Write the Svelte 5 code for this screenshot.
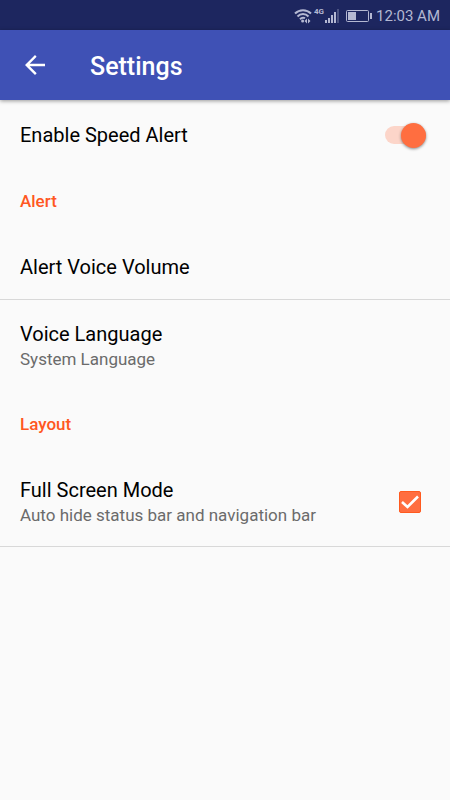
<!--
  App.svelte — settings screen for the speed alert app.
-->
<script lang="ts">
  let speedAlert = $state(true);
  let fullScreen = $state(true);
</script>

<div class="screen">
  <!-- System status bar -->
  <div class="status-bar">
    <svg class="status-wifi" viewBox="0 0 18 16" width="18" height="16" aria-hidden="true">
      <g fill="none" stroke="currentColor" stroke-width="2">
        <path d="M1 5.5C5.5 1 12.5 1 17 5.5" />
        <path d="M3.5 8.5C6.5 5.3 11.5 5.3 14.5 8.5" />
        <path d="M6 11.2C7.5 9.6 9.5 9.4 11 10.2" />
      </g>
      <circle cx="8.6" cy="13" r="1.5" fill="currentColor" />
      <path d="M13 10.5L10.5 13L13 15.5zM14 10.5L16.5 13L14 15.5z" fill="currentColor" />
    </svg>
    <span class="status-network">4G</span>
    <svg class="status-signal" viewBox="0 0 16 14" width="16" height="14" aria-hidden="true">
      <path d="M1 11h2v3H1zM4 9h2v5H4zM7 6h2v8H7zM10 3h2v11h-2z" fill="currentColor" />
      <path d="M13 0h2v14h-2z" fill="currentColor" opacity="0.3" />
    </svg>
    <svg class="status-battery" viewBox="0 0 26 13" width="26" height="13" aria-hidden="true">
      <rect x="0.5" y="0.5" width="22" height="11" rx="1" fill="none" stroke="currentColor" />
      <rect x="2" y="2" width="8" height="8" fill="currentColor" />
      <rect x="24" y="3" width="2" height="6" fill="currentColor" />
    </svg>
    <span class="status-time">12:03 AM</span>
  </div>

  <!-- App bar -->
  <header class="app-bar">
    <button class="back" type="button" aria-label="Back">
      <svg viewBox="0 0 20 20" width="20" height="20" aria-hidden="true">
        <path
          d="M20 8.8H4.7L11.6 1.8L10 0L0 10L10 20L11.7 18.2L4.7 11.2H20z"
          fill="currentColor"
        />
      </svg>
    </button>
    <h1>Settings</h1>
  </header>

  <main>
    <label class="row">
      <span class="row-text">
        <span class="row-title">Enable Speed Alert</span>
      </span>
      <input class="switch" type="checkbox" role="switch" bind:checked={speedAlert} />
    </label>

    <h2>Alert</h2>
    <button class="row divided" type="button">
      <span class="row-text">
        <span class="row-title">Alert Voice Volume</span>
      </span>
    </button>
    <button class="row" type="button">
      <span class="row-text">
        <span class="row-title">Voice Language</span>
        <span class="row-summary">System Language</span>
      </span>
    </button>

    <h2>Layout</h2>
    <label class="row divided">
      <span class="row-text">
        <span class="row-title">Full Screen Mode</span>
        <span class="row-summary">Auto hide status bar and navigation bar</span>
      </span>
      <span class="check">
        <input type="checkbox" bind:checked={fullScreen} />
        {#if fullScreen}
          <svg viewBox="0 0 22 22" width="22" height="22" aria-hidden="true">
            <path d="M3 11L8.5 16L19 5.5" fill="none" stroke="#fff" stroke-width="2.6" />
          </svg>
        {/if}
      </span>
    </label>
  </main>
</div>

<style>
  :global(body) {
    background: #fafafa;
  }

  .screen {
    min-height: 100vh;
    background: #fafafa;
    color: #000;
    font-family: Roboto, "Liberation Sans", sans-serif;
  }

  /* ── Status bar ── */
  .status-bar {
    display: flex;
    align-items: center;
    justify-content: flex-end;
    box-sizing: border-box;
    height: 30px;
    padding: 2px 10px 0 0;
    background: #1d265f;
    color: #b4b8d2;
  }

  .status-network {
    align-self: flex-start;
    margin: 5px 0 0 2px;
    font-size: 8px;
    font-weight: 700;
    line-height: 9px;
  }

  .status-signal {
    margin-right: 6px;
  }

  .status-battery {
    margin-right: 4px;
  }

  .status-time {
    font-size: 15px;
    line-height: 20px;
  }

  /* ── App bar ── */
  .app-bar {
    display: flex;
    align-items: center;
    height: 70px;
    background: #3f51b5;
    color: #fff;
    box-shadow: 0 1px 4px rgba(0, 0, 0, 0.4);
  }

  .back {
    display: flex;
    align-items: center;
    justify-content: center;
    width: 70px;
    height: 70px;
    padding: 0;
    border: 0;
    background: none;
    color: inherit;
    cursor: pointer;
  }

  h1 {
    margin: 0 20px;
    padding-top: 3px;
    font-size: 25px;
    font-weight: 500;
    line-height: 32px;
  }

  /* ── Preference rows ── */
  main {
    padding-top: 1px;
  }

  h2 {
    margin: 0;
    padding: 21px 20px 20px;
    color: #ff5722;
    font-size: 17px;
    font-weight: 500;
    line-height: 24px;
  }

  .row {
    display: flex;
    align-items: center;
    box-sizing: border-box;
    width: 100%;
    padding: 21px 24px 20px 20px;
    border: 0;
    background: none;
    color: inherit;
    font: inherit;
    text-align: left;
    cursor: pointer;
  }

  .divided {
    padding-bottom: 19px;
    border-bottom: 1px solid #d8d8d8;
  }

  .row-text {
    display: flex;
    flex: 1;
    flex-direction: column;
    min-width: 0;
  }

  .row-title {
    font-size: 20px;
    line-height: 26px;
  }

  .row-summary {
    color: #6b6b6b;
    font-size: 17px;
    line-height: 24px;
  }

  /* ── Switch ── */
  .switch {
    appearance: none;
    display: flex;
    align-items: center;
    flex-shrink: 0;
    width: 41px;
    height: 18px;
    margin: 0;
    border-radius: 9px;
    background: #cfcfcf;
    cursor: pointer;
  }

  .switch::before {
    content: "";
    width: 25px;
    height: 25px;
    border-radius: 50%;
    background: #f1f1f1;
    box-shadow: 0 1px 3px rgba(0, 0, 0, 0.45);
  }

  .switch:checked {
    justify-content: flex-end;
    background: #fcd5c9;
  }

  .switch:checked::before {
    background: #ff6e40;
  }

  /* ── Check box ── */
  .check {
    display: grid;
    flex-shrink: 0;
    margin-right: 5px;
  }

  .check input,
  .check svg {
    grid-area: 1 / 1;
  }

  .check input {
    appearance: none;
    box-sizing: border-box;
    width: 22px;
    height: 22px;
    margin: 0;
    border: 2px solid #757575;
    border-radius: 2px;
    cursor: pointer;
  }

  .check input:checked {
    border: 1px solid #ff5a1f;
    background: #ff6e40;
  }

  .check svg {
    pointer-events: none;
  }
</style>
